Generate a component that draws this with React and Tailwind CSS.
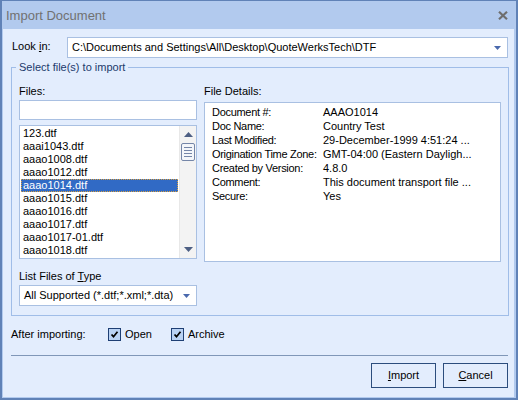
import React from "react";

const files = [
  "123.dtf",
  "aaai1043.dtf",
  "aaao1008.dtf",
  "aaao1012.dtf",
  "aaao1014.dtf",
  "aaao1015.dtf",
  "aaao1016.dtf",
  "aaao1017.dtf",
  "aaao1017-01.dtf",
  "aaao1018.dtf",
];

const details = [
  ["Document #:", "AAAO1014"],
  ["Doc Name:", "Country Test"],
  ["Last Modified:", "29-December-1999 4:51:24 ..."],
  ["Origination Time Zone:", "GMT-04:00 (Eastern Dayligh..."],
  ["Created by Version:", "4.8.0"],
  ["Comment:", "This document transport file ..."],
  ["Secure:", "Yes"],
];

function DropArrow() {
  return (
    <svg width="7" height="4" viewBox="0 0 7 4" className="shrink-0">
      <path d="M0 0h7L3.5 4z" fill="#4a69ad" />
    </svg>
  );
}

function ScrollArrow({ down }) {
  return (
    <div className="h-[17px] flex items-center justify-center">
      <svg width="9" height="5" viewBox="0 0 9 5">
        {down ? (
          <path d="M0 0h9L4.5 5z" fill="#4d5f83" />
        ) : (
          <path d="M0 5h9L4.5 0z" fill="#4d5f83" />
        )}
      </svg>
    </div>
  );
}

function Check({ label }) {
  return (
    <div className="flex items-center gap-[4px]">
      <div className="w-[13px] h-[13px] border border-[#1e3f74] bg-[#b9d2f4] flex items-center justify-center">
        <svg width="9" height="9" viewBox="0 0 9 9">
          <path d="M1.5 4.5l2 2.2L7.5 1.8" stroke="#000" strokeWidth="1.8" fill="none" />
        </svg>
      </div>
      <span>{label}</span>
    </div>
  );
}

export default function App() {
  return (
    <div className="w-[518px] h-[400px] bg-[#b2caee] border-t border-l-2 border-r-2 border-b-2 border-[#6082b7] font-['Liberation_Sans',Arial,sans-serif] text-[11px] leading-[13px] text-black flex flex-col">
      {/* Title bar */}
      <div className="h-[28px] flex items-center justify-between pl-[4px] pr-[8px] shrink-0">
        <span className="text-[13px] text-[#717171] pt-[1px]">Import Document</span>
        <svg width="10" height="9" viewBox="0 0 10 9" className="mt-[1px]">
          <path d="M1 0.8l8 7.4M9 0.8l-8 7.4" stroke="#6e6e6e" strokeWidth="2.2" />
        </svg>
      </div>

      {/* Client */}
      <div className="ml-[1px] mr-[2px] mb-[1px] h-[368px] bg-[#e3edfd] pl-[8px] pr-[6px] pt-[8px] flex flex-col">
        {/* Look in */}
        <div className="flex items-start h-[21px]">
          <div className="w-[56px] pl-[1px] pt-[3px]">
            Look <span className="underline">i</span>n:
          </div>
          <div className="flex-1 h-[21px] bg-white border border-[#a9c0e2] flex items-center justify-between pl-[4px] pr-[6px]">
            <span>C:\Documents and Settings\All\Desktop\QuoteWerksTech\DTF</span>
            <DropArrow />
          </div>
        </div>

        {/* Group */}
        <fieldset className="mt-[3px] mr-[1px] border border-[#a0bde8] pl-[7px] pr-[7px] pb-[9px] pt-0 h-[255px]">
          <legend className="-ml-[3px] px-[3px] text-[#1c3a6c] leading-[13px]">Select file(s) to import</legend>
          <div className="flex gap-[7px]">
            {/* Left column */}
            <div className="w-[178px] flex flex-col">
              <div className="mt-[11px]">Files:</div>
              <div className="mt-[2px] h-[20px] bg-white border border-[#a9c0e2]" />
              <div className="mt-[5px] h-[134px] bg-white border border-[#a9c0e2] flex">
                <div className="flex-1 pt-[1px] pl-[1px] pr-[1px] overflow-hidden">
                  {files.map((f) => (
                    <div
                      key={f}
                      className={
                        f === "aaao1014.dtf"
                          ? "h-[13px] pl-[2px] bg-[#316ac5] text-white outline outline-1 outline-dotted outline-[#d9a040] -outline-offset-1"
                          : "h-[13px] pl-[2px]"
                      }
                    >
                      {f}
                    </div>
                  ))}
                </div>
                <div className="w-[17px] bg-[#f3f3f3] border-l border-[#e8e8e8] flex flex-col">
                  <ScrollArrow />
                  <div className="mx-[1px] h-[18px] rounded-[2px] border border-[#7586a8] bg-[#f4f6fa] flex flex-col items-center justify-center gap-[2px]">
                    <div className="w-[8px] h-[1px] bg-[#7586a8]" />
                    <div className="w-[8px] h-[1px] bg-[#7586a8]" />
                    <div className="w-[8px] h-[1px] bg-[#7586a8]" />
                    <div className="w-[8px] h-[1px] bg-[#7586a8]" />
                  </div>
                  <div className="flex-1" />
                  <ScrollArrow down />
                </div>
              </div>
              <div className="mt-[11px]">
                List Files of <span className="underline">T</span>ype
              </div>
              <div className="mt-[2px] h-[21px] bg-white border border-[#a9c0e2] flex items-center justify-between pl-[4px] pr-[6px]">
                <span>All Supported (*.dtf;*.xml;*.dta)</span>
                <DropArrow />
              </div>
            </div>

            {/* Right column */}
            <div className="w-[297px] flex flex-col">
              <div className="mt-[11px]">File Details:</div>
              <div className="mt-[4px] h-[160px] bg-white border border-[#a9c0e2] pl-[7px] pt-[2px]">
                {details.map(([k, v]) => (
                  <div key={k} className="flex h-[14px] leading-[14px] whitespace-nowrap">
                    <div className="w-[111px] shrink-0 tracking-[-0.3px]">{k}</div>
                    <div>{v}</div>
                  </div>
                ))}
              </div>
            </div>
          </div>
        </fieldset>

        {/* After importing */}
        <div className="mt-[11px] h-[14px] flex items-center">
          <div className="w-[97px]">After importing:</div>
          <div className="w-[63px]">
            <Check label="Open" />
          </div>
          <Check label="Archive" />
        </div>

        <div className="mt-[14px] h-[1px] bg-[#8097b8]" />

        {/* Buttons */}
        <div className="mt-[7px] flex justify-end gap-[7px]">
          <button className="w-[65px] h-[25px] border border-[#2c4d7d] bg-[#e3edfd] text-[11px]">
            <span className="underline">I</span>mport
          </button>
          <button className="w-[65px] h-[25px] border border-[#2c4d7d] bg-[#e3edfd] text-[11px]">
            <span className="underline">C</span>ancel
          </button>
        </div>
      </div>
    </div>
  );
}
